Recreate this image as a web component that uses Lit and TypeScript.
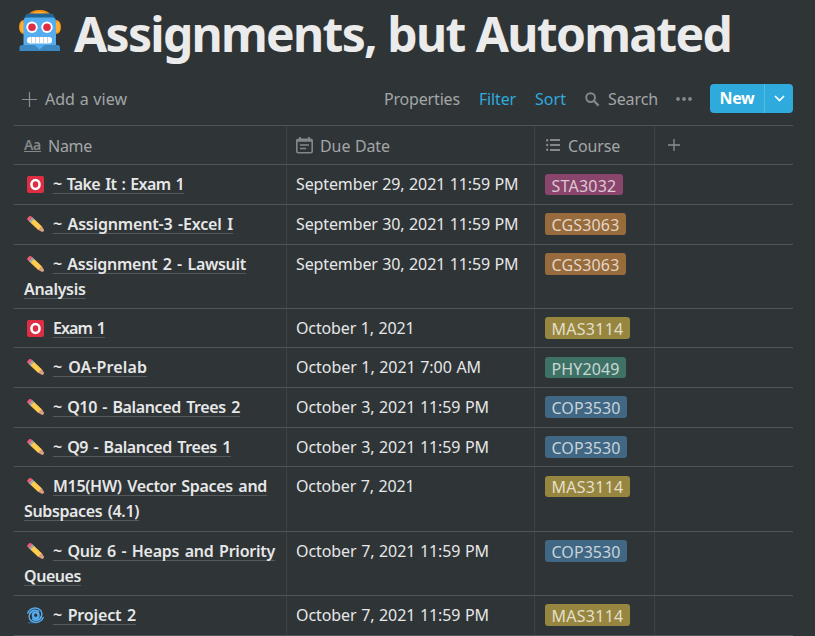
import { LitElement, html, css, svg } from "lit";
import { customElement, property } from "lit/decorators.js";
import { styleMap } from "lit/directives/style-map.js";

const FAMILY = '"Noto Sans", "Open Sans", sans-serif';
const ctx = document.createElement("canvas").getContext("2d")!;

/** A run of text tracked so that it advances by exactly `width` pixels. */
@customElement("fit-text")
class FitText extends LitElement {
  @property() text = "";
  @property({ type: Number }) width = 0;
  @property({ type: Number }) size = 16;
  @property({ type: Number }) weight = 400;

  static styles = css`
    :host { display: inline-block; white-space: pre; }
    .run { text-decoration: inherit; }
  `;

  render() {
    ctx.font = `${this.weight} ${this.size}px ${FAMILY}`;
    const natural = ctx.measureText(this.text).width;
    const wordSpacing = this.weight === 600 ? 1.6 : 0.5;
    const words = (this.text.split(" ").length - 1) * wordSpacing;
    const spacing = (this.width - natural - words) / this.text.length;
    return html`<span class="run" style=${styleMap({
      letterSpacing: `${spacing.toFixed(3)}px`,
      wordSpacing: `${wordSpacing}px`,
      fontSize: `${this.size}px`,
      fontWeight: `${this.weight}`,
    })}>${this.text}</span>`;
  }
}

const fit = (text: string, width: number, weight = 400, size = 16, cls = "") =>
  html`<fit-text class=${cls} .text=${text} .width=${width} .weight=${weight} .size=${size}></fit-text>`;

type Line = [string, number];
interface Row {
  icon: "ring" | "pencil" | "cyclone";
  name: Line[];
  due: Line;
  course: keyof typeof COURSES;
  place?: "low" | "short";
}

const COURSES = {
  STA3032: { cls: "pink", width: 65 },
  CGS3063: { cls: "orange", width: 68 },
  MAS3114: { cls: "yellow", width: 72 },
  PHY2049: { cls: "green", width: 68 },
  COP3530: { cls: "blue", width: 69 },
};

const ROWS: Row[] = [
  { icon: "ring", name: [["~ Take It : Exam 1", 131]], due: ["September 29, 2021 11:59 PM", 222.5], course: "STA3032", place: "low" },
  { icon: "pencil", name: [["~ Assignment-3 -Excel I", 180]], due: ["September 30, 2021 11:59 PM", 222.5], course: "CGS3063" },
  { icon: "pencil", name: [["~ Assignment 2 - Lawsuit", 193], ["Analysis", 61.5]], due: ["September 30, 2021 11:59 PM", 222.5], course: "CGS3063" },
  { icon: "ring", name: [["Exam 1", 52]], due: ["October 1, 2021", 118.5], course: "MAS3114" },
  { icon: "pencil", name: [["~ OA-Prelab", 94]], due: ["October 1, 2021 7:00 AM", 185], course: "PHY2049", place: "low" },
  { icon: "pencil", name: [["~ Q10 - Balanced Trees 2", 187]], due: ["October 3, 2021 11:59 PM", 193], course: "COP3530" },
  { icon: "pencil", name: [["~ Q9 - Balanced Trees 1", 178]], due: ["October 3, 2021 11:59 PM", 193], course: "COP3530" },
  { icon: "pencil", name: [["M15(HW) Vector Spaces and", 214], ["Subspaces (4.1)", 115]], due: ["October 7, 2021", 118.5], course: "MAS3114", place: "short" },
  { icon: "pencil", name: [["~ Quiz 6 - Heaps and Priority", 222], ["Queues", 57]], due: ["October 7, 2021 11:59 PM", 193], course: "COP3530" },
  { icon: "cyclone", name: [["~ Project 2", 83]], due: ["October 7, 2021 11:59 PM", 193], course: "MAS3114" },
];

const GLYPHS = {
  ring: svg`<rect width="36" height="36" rx="4" fill="#dd2e44"/>
    <ellipse cx="18" cy="18" rx="8.500" ry="9.500" fill="none" stroke="#fff" stroke-width="5.500"/>`,
  pencil: svg`<g transform="translate(4 3.500) rotate(43)">
    <path d="M1.500 -5.500h6v11H1.500a3 3 0 0 1-3-3v-5a3 3 0 0 1 3-3z" fill="#ea596e"/>
    <path d="M5 -5.500h6v11H5z" fill="#99aab5"/>
    <path d="M10 -5.500h23v11H10z" fill="#ffcc4d"/>
    <path d="M32 -5.500L41 -3Q44 0 41 3L32 5.500z" fill="#d99e82"/></g>`,
  cyclone: svg`<g fill="none" stroke="#55acee" stroke-linecap="round">
    <circle cx="18.500" cy="17.500" r="6" stroke-width="5"/>
    <path d="M1.500 13C5 3 18 -1 27 5.500C32 9 33 17 29 23" stroke-width="3"/>
    <path d="M6 14C9 7 18 5 24 9.500" stroke-width="4"/>
    <path d="M34.500 22C31 32 18 36 9 29.500C4 26 3 18 7 12" stroke-width="3"/>
    <path d="M30 21C27 28 18 30 12 25.500" stroke-width="4"/>
    <path d="M3 33.500H14" stroke-width="1.500" stroke="#3b88c3"/></g>`,
};

@customElement("app-root")
class AppRoot extends LitElement {
  static styles = css`
    :host {
      display: block; box-sizing: border-box; width: 815px; height: 636px;
      overflow: hidden; background: #2f3437; color: #e6e7e7;
      font: 16px/25px "Noto Sans", "Open Sans", sans-serif;
      padding: 0 22px 0 14px;
    }
    svg { display: block; flex: none; }
    .title { display: flex; height: 76px; padding-left: 5px; }
    .robot { margin: 10px 13px 0 0; }
    .heading { margin: 0; font-size: 48px; line-height: 68px; color: #ebebeb; }
    .bar { display: flex; align-items: center; height: 46px; margin-bottom: 3px; color: #a3a6a7; }
    .plus { margin: 0 8px 0 8px; }
    .tools { display: flex; align-items: center; margin-left: auto; }
    .gap { margin-right: 19px; }
    .accent { color: #2eaadc; }
    .lens { margin-right: 8px; }
    .dots { margin: 0 18px; }
    .new { display: flex; height: 29px; width: 83px; border-radius: 4px; background: #2eaadc; color: #fff; align-items: center; overflow: hidden; margin-bottom: 2px; }
    .label { display: flex; justify-content: center; width: 54px; margin-right: auto; }
    .more { display: flex; align-items: center; justify-content: center; width: 29px; height: 29px; border-left: 1px solid #58bbe3; box-sizing: border-box; }
    .table { display: grid; grid-template-rows: 39px 40px 40px 64px 39px 40px 40px 39px 65px 64px 40px 1px; }
    .row { display: grid; grid-template-columns: 272px 248px 120px 1fr; border-top: 1px solid #505457; }
    .cell { padding: 7px 0 0 9px; border-left: 1px solid #3d4245; }
    .cell:first-child { padding-left: 10px; border: 0; }
    .head { color: #a3a6a7; }
    .head .cell { display: flex; padding-top: 8px; }
    .aa { font-size: 14px; line-height: 13px; height: 14px; width: 17px; box-sizing: border-box; border-bottom: 1px solid #84888a; margin: 4px 7px 0 0; color: #84888a; display: flex; }
    .i-date { margin: 3px 7px 0 0; }
    .i-list { margin: 5px 8px 0 2px; }
    .i-add { margin: 5px 0 0 4px; }
    .line { display: flex; height: 25px; }
    .emoji { margin: 4px 9px 0 3px; }
    .name { text-decoration: underline 1px #54595b; text-decoration-skip-ink: none; text-underline-offset: 2.500px; }
    .tag { display: flex; width: max-content; height: 22px; line-height: 25px; padding: 0 6.500px; border-radius: 3px; margin: 1px 0 0 1px; }
    .low { height: 21px; margin-top: 2px; line-height: 24px; }
    .short { height: 21px; margin-top: 2px; line-height: 22px; }
    .pink { background: #8a456c; color: #dcc8d3; }
    .orange { background: #976b3c; color: #e2d5c7; }
    .yellow { background: #978640; color: #e3dfca; }
    .green { background: #3f7266; color: #c9d6d3; }
    .blue { background: #406783; color: #c8d3dc; }
  `;

  row(r: Row) {
    const c = COURSES[r.course];
    return html`<div class="row">
      <div class="cell">
        ${r.name.map(([text, width], i) => html`<div class="line">
          ${i === 0 ? html`<svg class="emoji" width="17" height="17" viewBox="0 0 36 36">${GLYPHS[r.icon]}</svg>` : ""}
          ${fit(text, width, 600, 16, "name")}</div>`)}
      </div>
      <div class="cell">${fit(r.due[0], r.due[1])}</div>
      <div class="cell"><span class="tag ${c.cls} ${r.place ?? ""}">${fit(r.course, c.width)}</span></div>
      <div class="cell"></div>
    </div>`;
  }

  render() {
    return html`
      <div class="title">
        <svg class="robot" width="42" height="42" viewBox="0 0 42 42">
          <ellipse cx="20.500" cy="4.500" rx="10.500" ry="4.400" fill="#f4900c"/>
          <ellipse cx="20.500" cy="4.200" rx="6" ry="2.600" fill="#ffac33"/>
          <ellipse cx="4.500" cy="17" rx="4.500" ry="7" fill="#f4900c"/>
          <ellipse cx="37.500" cy="17" rx="4.500" ry="7" fill="#f4900c"/>
          <ellipse cx="3.500" cy="17" rx="2.500" ry="5.500" fill="#ffac33"/>
          <ellipse cx="38.500" cy="17" rx="2.500" ry="5.500" fill="#ffac33"/>
          <path d="M9 3.500H32Q34 3.500 35 5.500L36.500 9H4.500L6.500 5.500Q7.500 3.500 9 3.500z" fill="#226699"/>
          <path d="M8 7.500H33Q37 7.500 37 11.500V35H4.500V11.500Q4.500 7.500 8 7.500z" fill="#55acee"/>
          <path d="M3 35H38.500Q41 35 41 37.500V41H.5V37.500Q.5 35 3 35z" fill="#3b88c3"/>
          <path d="M15.500 35H25.500L20.500 39.500z" fill="#55acee"/>
          <circle cx="13" cy="17.300" r="5.700" fill="#fff"/><circle cx="28" cy="17.300" r="5.700" fill="#fff"/>
          <circle cx="13" cy="17.300" r="3.800" fill="#dd2e44"/><circle cx="28" cy="17.300" r="3.800" fill="#dd2e44"/>
          <rect x="8" y="27" width="25" height="6.500" rx="3" fill="#fff"/>
          <path d="M12.500 27v6.500M16.500 27v6.500M20.500 27v6.500M24.500 27v6.500M28.500 27v6.500" stroke="#ccd6dd" stroke-width="1.100"/>
        </svg>
        <h1 class="heading">${fit("Assignments, but Automated", 657, 700, 48)}</h1>
      </div>
      <div class="bar">
        <svg class="plus" width="15" height="15" viewBox="0 0 15 15"><path d="M7.500 0v15M0 7.500h15" stroke="#8b8f90" stroke-width="1.200"/></svg>
        ${fit("Add a view", 82)}
        <div class="tools">
          ${fit("Properties", 76, 400, 16, "gap")}
          ${fit("Filter", 37, 400, 16, "gap accent")}
          ${fit("Sort", 31, 400, 16, "gap accent")}
          <svg class="lens" width="15" height="15" viewBox="0 0 15 15"><circle cx="5.600" cy="5.600" r="4.400" fill="none" stroke="#85898a" stroke-width="1.900"/><path d="M8.800 8.800L13.600 13.600" stroke="#85898a" stroke-width="2.200"/></svg>
          ${fit("Search", 50)}
          <svg class="dots" width="16" height="4" viewBox="0 0 16 4" fill="#85898a"><circle cx="2" cy="2" r="1.900"/><circle cx="8" cy="2" r="1.900"/><circle cx="14" cy="2" r="1.900"/></svg>
          <div class="new">
            <span class="label">${fit("New", 35, 700)}</span>
            <span class="more"><svg width="11" height="7" viewBox="0 0 11 7"><path d="M1 1L5.500 5.500L10 1" fill="none" stroke="#fff" stroke-width="1.700"/></svg></span>
          </div>
        </div>
      </div>
      <div class="table">
        <div class="row head">
          <div class="cell"><span class="aa">${fit("Aa", 17, 600, 14)}</span>${fit("Name", 44)}</div>
          <div class="cell">
            <svg class="i-date" width="17" height="17" viewBox="0 0 17 17" fill="none" stroke="#84888a"><rect x=".8" y="2.300" width="15.400" height="13.400" rx="1.500" stroke-width="1.600"/><path d="M1 3.500H16" stroke-width="2.500"/><path d="M4 0V3M13 0V3" stroke-width="1.800"/><path d="M4 8H13M4 11.500H10" stroke-width="1.400"/></svg>
            ${fit("Due Date", 70)}
          </div>
          <div class="cell">
            <svg class="i-list" width="14" height="12" viewBox="0 0 14 12" fill="#84888a"><path d="M4 0H14V2H4zM4 5H14V7H4zM4 10H14V12H4z"/><circle cx="1.200" cy="1.200" r="1.200"/><circle cx="1.200" cy="6" r="1.200"/><circle cx="1.200" cy="10.700" r="1.200"/></svg>
            ${fit("Course", 52)}
          </div>
          <div class="cell"><svg class="i-add" width="12" height="12" viewBox="0 0 12 12"><path d="M6 0v12M0 6h12" stroke="#8b8f90" stroke-width="1.300"/></svg></div>
        </div>
        ${ROWS.map((r) => this.row(r))}
        <div class="row"></div>
      </div>
    `;
  }
}
